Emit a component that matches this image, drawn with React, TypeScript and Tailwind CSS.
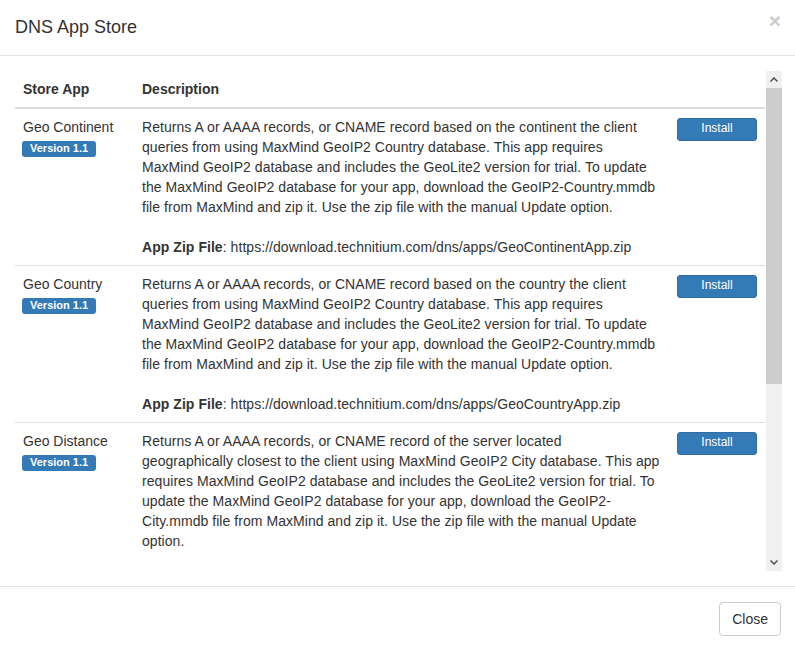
const apps = [
  {
    name: "Geo Continent",
    version: "1.1",
    lines: [
      "Returns A or AAAA records, or CNAME record based on the continent the client",
      "queries from using MaxMind GeoIP2 Country database. This app requires",
      "MaxMind GeoIP2 database and includes the GeoLite2 version for trial. To update",
      "the MaxMind GeoIP2 database for your app, download the GeoIP2-Country.mmdb",
      "file from MaxMind and zip it. Use the zip file with the manual Update option.",
    ],
    url: "https://download.technitium.com/dns/apps/GeoContinentApp.zip",
  },
  {
    name: "Geo Country",
    version: "1.1",
    lines: [
      "Returns A or AAAA records, or CNAME record based on the country the client",
      "queries from using MaxMind GeoIP2 Country database. This app requires",
      "MaxMind GeoIP2 database and includes the GeoLite2 version for trial. To update",
      "the MaxMind GeoIP2 database for your app, download the GeoIP2-Country.mmdb",
      "file from MaxMind and zip it. Use the zip file with the manual Update option.",
    ],
    url: "https://download.technitium.com/dns/apps/GeoCountryApp.zip",
  },
  {
    name: "Geo Distance",
    version: "1.1",
    lines: [
      "Returns A or AAAA records, or CNAME record of the server located",
      "geographically closest to the client using MaxMind GeoIP2 City database. This app",
      "requires MaxMind GeoIP2 database and includes the GeoLite2 version for trial. To",
      "update the MaxMind GeoIP2 database for your app, download the GeoIP2-",
      "City.mmdb file from MaxMind and zip it. Use the zip file with the manual Update",
      "option.",
    ],
    url: "https://download.technitium.com/dns/apps/GeoDistanceApp.zip",
  },
];

function Chevron({ down }: { down?: boolean }) {
  return (
    <svg width="8" height="5" viewBox="0 0 8 5" className="block">
      <polyline
        points={down ? "0.5,0.5 4,4 7.5,0.5" : "0.5,4.5 4,1 7.5,4.5"}
        fill="none"
        stroke="#505050"
        strokeWidth="1.5"
      />
    </svg>
  );
}

export default function App() {
  return (
    <div className="w-[795px] h-[650px] overflow-hidden bg-white text-[14px] leading-[20px] text-[#333] font-['Liberation_Sans',Arial,sans-serif]">
      {/* Header */}
      <div className="h-[56px] border-b border-[#e5e5e5] pl-[15px] pr-[14px] flex items-start justify-between">
        <h4 className="mt-[14px] text-[18px] leading-[26px]">DNS App Store</h4>
        <button className="mt-[10px] text-[21px] leading-[21px] font-bold text-black opacity-20">
          ×
        </button>
      </div>

      {/* Body */}
      <div className="pt-[15px] pb-[15px] pl-[15px] pr-[13px]">
        <div className="flex h-[500px]">
          <div className="w-[751px] overflow-hidden">
            <table className="w-[750px] table-fixed border-collapse">
              <colgroup>
                <col className="w-[119px]" />
                <col className="w-[535px]" />
                <col className="w-[96px]" />
              </colgroup>
              <thead>
                <tr className="border-b-2 border-[#ddd]">
                  <th className="p-[8px] text-left font-bold">Store App</th>
                  <th className="p-[8px] text-left font-bold">Description</th>
                  <th className="p-[8px]"></th>
                </tr>
              </thead>
              <tbody>
                {apps.map((app) => (
                  <tr key={app.name} className="border-b border-[#ddd] align-top">
                    <td className="p-[8px]">
                      <div>{app.name}</div>
                      <div className="-ml-px mt-[2px] leading-[17px]">
                        <span className="inline-block rounded-[3px] bg-[#337ab7] px-[8px] pt-[2px] pb-[3px] text-[11px] leading-[11px] font-bold text-white">
                          Version {app.version}
                        </span>
                      </div>
                    </td>
                    <td className="p-[8px] whitespace-nowrap tracking-[0.05px]">
                      {app.lines.map((line) => (
                        <div key={line}>{line}</div>
                      ))}
                      <div className="mt-[20px]">
                        <b>App Zip File</b>: {app.url}
                      </div>
                    </td>
                    <td className="p-[8px]">
                      <button className="w-[80px] h-[23px] rounded-[3px] border border-[#2e6da4] bg-[#337ab7] pb-[2px] text-[12px] leading-[18px] text-white">
                        Install
                      </button>
                    </td>
                  </tr>
                ))}
              </tbody>
            </table>
          </div>

          {/* Scrollbar */}
          <div className="w-[16px] bg-[#f0f0f0] flex flex-col">
            <div className="h-[17px] flex items-center justify-center">
              <Chevron />
            </div>
            <div className="h-[296px] bg-[#cdcdcd]" />
            <div className="flex-1" />
            <div className="h-[17px] flex items-center justify-center">
              <Chevron down />
            </div>
          </div>
        </div>
      </div>

      {/* Footer */}
      <div className="border-t border-[#e5e5e5] pt-[15px] pl-[15px] pr-[14px] flex justify-end">
        <button className="h-[34px] px-[12px] rounded-[4px] border border-[#ccc] bg-white text-[14px] text-[#333]">
          Close
        </button>
      </div>
    </div>
  );
}
